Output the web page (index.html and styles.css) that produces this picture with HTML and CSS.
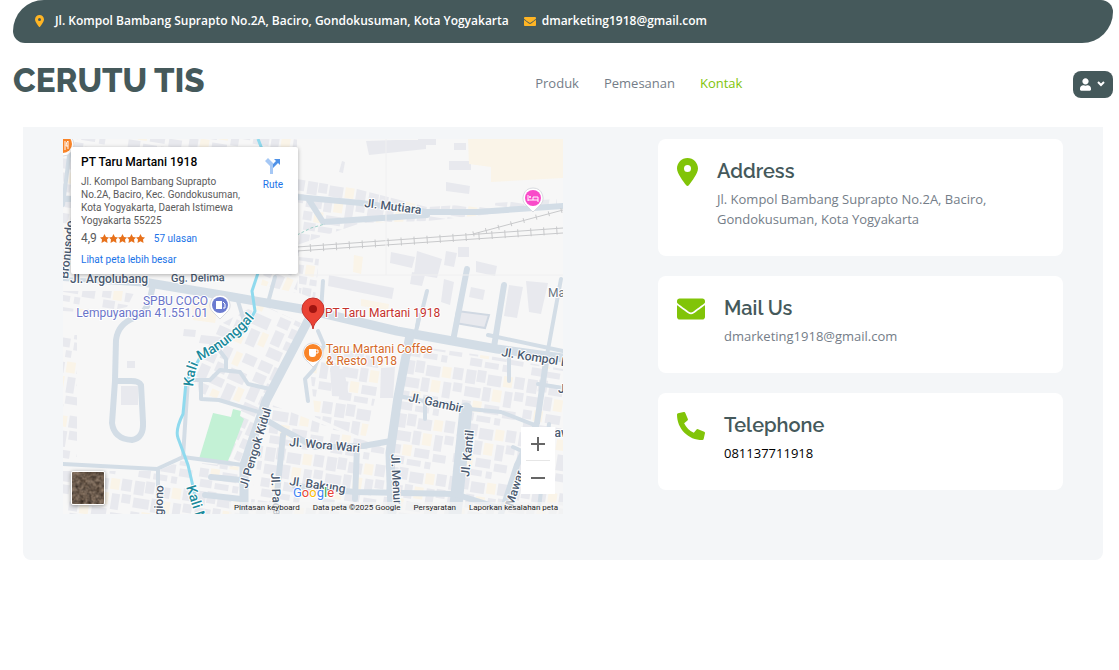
FILE: index.html
```html
<!DOCTYPE html>
<html lang="id">
<head>
  <meta charset="UTF-8">
  <meta name="viewport" content="width=device-width, initial-scale=1.0">
  <title>Cerutu TIS - Kontak</title>
  <link rel="stylesheet" href="styles.css">
</head>
<body>
  <svg class="sprite" aria-hidden="true">
    <symbol id="icon-pin" viewBox="0 0 384 512"><path d="M215.700 499.200C267 435 384 279.400 384 192C384 86 298 0 192 0S0 86 0 192c0 87.400 117 243 168.300 307.200c12.300 15.300 35.100 15.300 47.400 0zM192 128a64 64 0 1 1 0 128 64 64 0 1 1 0-128z"/></symbol>
    <symbol id="icon-mail" viewBox="0 64 512 384"><path d="M502.300 190.800c3.900-3.100 9.700-.2 9.700 4.700V400c0 26.500-21.500 48-48 48H48c-26.500 0-48-21.500-48-48V195.600c0-5 5.700-7.800 9.700-4.700 22.400 17.400 52.100 39.500 154.100 113.600 21.100 15.400 56.700 47.800 92.200 47.600 35.700.3 72-32.800 92.300-47.600 102-74.100 131.600-96.300 154-113.700zM256 320c23.200.4 56.600-29.200 73.400-41.400 132.700-96.300 142.800-104.700 173.400-128.700 5.800-4.500 9.200-11.500 9.200-18.900v-19c0-26.500-21.500-48-48-48H48c-26.500 0-48 21.500-48 48v19c0 7.400 3.400 14.300 9.200 18.900 30.600 23.900 40.700 32.400 173.400 128.700 16.800 12.200 50.200 41.800 73.400 41.400z"/></symbol>
    <symbol id="icon-phone" viewBox="0 0 512 512"><path d="M497.390 361.800l-112-48a24 24 0 0 0-28 6.900l-49.600 60.600A370.660 370.660 0 0 1 130.600 204.110l60.600-49.600a23.940 23.940 0 0 0 6.900-28l-48-112A24.160 24.160 0 0 0 122.600.61l-104 24A24 24 0 0 0 0 48c0 256.500 207.900 464 464 464a24 24 0 0 0 23.400-18.600l24-104a24.290 24.290 0 0 0-14.010-27.600z"/></symbol>
    <symbol id="icon-user" viewBox="0 0 448 512"><path d="M224 256c70.700 0 128-57.300 128-128S294.700 0 224 0 96 57.300 96 128s57.300 128 128 128zm89.600 32h-16.700c-22.200 10.200-46.900 16-72.900 16s-50.600-5.800-72.900-16h-16.700C60.200 288 0 348.200 0 422.400V464c0 26.500 21.500 48 48 48h352c26.500 0 48-21.500 48-48v-41.600c0-74.200-60.200-134.400-134.400-134.400z"/></symbol>
  </svg>

  <header class="header">
    <div class="topbar">
      <span class="topbar-item">
        <svg class="icon-top tall"><use href="#icon-pin"/></svg>
        <a href="#">Jl. Kompol Bambang Suprapto No.2A, Baciro, Gondokusuman, Kota Yogyakarta</a>
      </span>
      <span class="topbar-item">
        <svg class="icon-top wide"><use href="#icon-mail"/></svg>
        <a href="#">dmarketing1918@gmail.com</a>
      </span>
    </div>
    <nav class="navbar">
      <a href="#" class="brand"><h1>CERUTU TIS</h1></a>
      <div class="nav-links">
        <a href="#">Produk</a>
        <a href="#">Pemesanan</a>
        <a href="#" class="active">Kontak</a>
      </div>
      <button class="user-btn" type="button" aria-label="Akun">
        <svg class="icon-user"><use href="#icon-user"/></svg>
        <svg class="icon-caret" viewBox="0 0 8 6"><path d="M1 1l3 3 3-3"/></svg>
      </button>
    </nav>
  </header>

  <main class="contact">
    <div class="map">
      <svg class="map-canvas" viewBox="0 0 500 375" preserveAspectRatio="xMidYMid slice">
        <defs>
          <pattern id="houses" width="62" height="54" patternUnits="userSpaceOnUse" patternTransform="rotate(9)">
            <path class="house" d="M1 2h10v14h-10zM12 1h9v12h-9zM23 4h14v11h-14zM50 2h10v12h-10zM2 19h16v10h-16zM20 17h8v14h-8zM42 18h8v16h-8zM52 17h9v9h-9zM1 33h9v9h-9zM24 34h15v9h-15zM43 37h13v8h-13zM3 44h12v8h-12zM18 46h14v6h-14zM36 46h6v7h-6z"/>
            <path class="shop" d="M39 3h9v11h-9zM30 18h9v12h-9zM12 32h9v11h-9z"/>
          </pattern>
          <pattern id="houses-steep" width="54" height="60" patternUnits="userSpaceOnUse" patternTransform="rotate(24)">
            <path class="house" d="M1 1h13v10h-13zM16 2h9v14h-9zM38 1h13v10h-13zM1 14h12v10h-12zM31 20h17v12h-17zM16 20h11v10h-11zM2 28h10v15h-10zM16 34h14v9h-14zM33 36h10v17h-10zM3 46h15v10h-15z"/>
            <path class="shop" d="M29 3h7v14h-7zM45 35h7v14h-7zM22 47h8v8h-8z"/>
          </pattern>
        </defs>
        <rect class="land" width="500" height="375"/>

        <!-- blocks of houses -->
        <g fill="url(#houses)">
          <path d="M0 0h234v60l-20 60H0z"/>
          <path d="M234 40l60 10 70 18 130-8v8l-130 14-66 2-64 22z"/>
          <path d="M0 152h72l-8 16-28 6-36-2z"/>
          <path d="M262 206l62 4-12 50-10 40-50-22-4-40z"/>
          <path d="M344 206l88 12 68 12v145H340l-14-40z"/>
          <path d="M204 264l130 50 6 61H186z"/>
          <path d="M0 332h94l24-10 60 6v47H0z"/>
          <path d="M0 196h14v130H0z"/>
          <path d="M236 118l20 2-4 40-16-6z"/>
        </g>
        <g fill="url(#houses-steep)">
          <path d="M132 226l24-40 40-22 42 20-34 78-30 66-20-2 22-60-40-12z"/>
          <path d="M206 110l30 2-2 42-36-8z"/>
        </g>
        <path class="house" d="M303 2l60-2v10l-57 6zM355 0h18v6h-18zM391 4h12v7h-12zM386 22h22v9h-22zM383 43l24 4-1 8-23-3zM279 22l3 1-2 11-4-1z"/>
        <path class="house" d="M266 136l65 13-2 11-64-13zM328 113l24 5-3 11-22-5zM354 112l25 8-5 19-23-4zM383 112l11 2-3 14-10-2zM395 108h11v10h-11zM413 122l21 5-2 10-19-4zM349 133l13 3-3 11-12-2zM381 140l10 3-4 23-9-3zM408 148l14 3-2 10-14-3zM446 146l14 2-6 31-13-2zM463 142l22 2-7 31-12-2z"/>
        <path class="house" d="M58 247h17v19H58zM64 222h8v7h-8zM121 190l12 1-1 7-12-1zM138 196l20 2-2 8-20-2zM267 229l14 1 5 28-17-1zM318 229l14-1-2 31h-13z"/>
        <path class="shop" d="M405 0h95v39l-72 4V28l-22-3zM291 116l9 2-2 17-8-2zM298 160l28 5-1 6-27-4zM128 160l28 4-4 20-22-3z"/>
        <path class="house outline" d="M394 172l32 4-4 13-30-5z"/>
        <path class="park" d="M150 274l18 4 2-8 8 2-1 5 4 3-16 42-29-2z"/>

        <g class="roads">
          <path class="road w7" d="M0 66l8-66M0 140l34 2"/>
          <path class="road w13" d="M34 140l46 3 84 14 86 15 84 20 100 18 66 9"/>
          <path class="road w9" d="M0 60l234-2 64 6 66 9h50l86-6M364 76l-104 7-14-22"/>
          <path class="road w9" d="M90 146l-3 14q-4 14-16 19-16 6-18 22l-1 40M52 242l-3 42q2 16 20 17 12-2 11-18l-2-37q-2-4-10-4z"/>
          <path class="road w7" d="M0 325l94 5 26-12 60 8M95 331v44M125 240l-5 78"/>
          <path class="road w13" d="M249 174l-46 88-22 64v49"/>
          <path class="road w7" d="M125 241h22l10-10 20 2 8 12 22 5M163 230v-10l-6-8M138 260l18 1 46 14M138 260v-18M175 162l6 20M212 138l-6 22"/>
          <path class="road w9" d="M198 278l24 14 30 16 48-1 28-5M220 296l-8 79M148 338l30 3M142 356l36 4M294 308l-2 52"/>
          <path class="road w13" d="M347 196l-12 62-8 56 2 59"/>
          <path class="road w7" d="M336 257l60 12 42 4 36 14M362 260v20M255 192l6 14-10 24-9 10 3 22M260 142l-2 30M364 152l-5 20M356 176l-2 12M446 216v26"/>
          <path class="road w15" d="M403 270l-11 105"/>
          <path class="road w9" d="M232 347l60 6 100 2 44 14M484 216l-10 68-20 42-16 49M404 130l-14 72M441 146l-10 62"/>
          <path class="road w7" d="M498 140l-14 76M425 196l75 16M486 285l-10 84M475 245l25 4M450 308l40 18M356 180l-4 16"/>
        </g>
        <path class="river" d="M195 0l8 20-12 90 4 24-6 18 3 20-10 20-44 25-15 26-3 32q-8 16-5 24l10 27 10 43"/>
        <path class="rail" d="M234 108l266-19M234 112l266-18M410 95l90-24"/>
        <path class="rail ties" d="M234 110l266-19"/>
        <path class="rail ties thin" d="M410 95l90-24"/>
        <path class="trail" d="M234 96l14-7 14-4"/>
        <path class="parcel" d="M323 0v136M234 136h266"/>

        <g class="street">
          <text x="301" y="68" transform="rotate(7 301 68)">Jl. Mutiara</text>
          <text x="7" y="144">Jl. Argolubang</text>
          <text class="small" x="108" y="143" transform="rotate(-1 108 143)">Gg. Delima</text>
          <text x="438" y="217" transform="rotate(9 438 217)">Jl. Kompol Bambang</text>
          <text x="345" y="262" transform="rotate(12 345 262)">Jl. Gambir</text>
          <text x="226" y="307" transform="rotate(5 226 307)">Jl. Wora Wari</text>
          <text x="226" y="346" transform="rotate(8 226 346)">Jl. Bakung</text>
          <text x="184" y="350" transform="rotate(-73 184 350)">Jl Pengok Kidul</text>
          <text x="406" y="338" transform="rotate(-84 406 338)">Jl. Kantil</text>
          <text x="328" y="315" transform="rotate(87 328 315)">Jl. Menur</text>
          <text x="208" y="334" transform="rotate(87 208 334)">Jl. Pacar</text>
          <text x="450" y="368" transform="rotate(-72 450 368)">Mawar</text>
          <text x="99" y="390" transform="rotate(-88 99 390)">Jogiono</text>
          <text x="5" y="140" transform="rotate(-84 5 140)">Bronusodo</text>
          <text x="485" y="158" class="plain">Mawar</text>
          <text x="481" y="298">Mawar</text>
          <text x="495" y="254">Jl.</text>
        </g>
        <path id="kali" fill="none" d="M130 248q2-20 8-27 38-18 62-54"/>
        <g class="water">
          <text><textPath href="#kali">Kali Manunggal</textPath></text>
          <text x="123" y="348" transform="rotate(72 123 348)">Kali Manunggal</text>
        </g>

        <!-- places -->
        <g class="place">
          <g class="fuel"><path class="bubble" d="M157 156a10 10 0 0 1 6 18l-6 6-6-6a10 10 0 0 1 6-18z"/><circle cx="157" cy="166" r="8"/>
            <path class="glyph" d="M153 162h6v8h-6z"/><path class="glyph-line" d="M160 163l2 2v4h-2"/>
            <text x="145" y="166" text-anchor="end">SPBU COCO</text><text x="145" y="178" text-anchor="end">Lempuyangan 41.551.01</text></g>
          <g class="food"><path class="bubble" d="M250 204a10 10 0 0 1 6 18l-6 6-6-6a10 10 0 0 1 6-18z"/><circle cx="250" cy="214" r="9"/>
            <path class="glyph" d="M246 210h7v5q0 3-3 3h-1q-3 0-3-3z"/><path class="glyph-line" d="M253 211h2v3h-2"/>
            <text x="263" y="214">Taru Martani Coffee</text><text x="263" y="226">&amp; Resto 1918</text></g>
          <g class="food"><circle class="bubble" cx="0" cy="6" r="11"/><circle cx="0" cy="5" r="9"/><path class="glyph-line" d="M2 2v9M5 10V2q-2 1-2 5h2"/></g>
          <g class="hotel"><path class="bubble" d="M470 49a10 10 0 0 1 6 18l-6 6-6-6a10 10 0 0 1 6-18z"/><circle cx="470" cy="59" r="8"/>
            <path class="glyph-line" d="M465 56v6M465 61h10v2M475 61v-3h-5v3"/><circle class="glyph" cx="467" cy="58" r="1"/></g>
          <g class="main-place"><path class="marker" d="M250 190c-1-9-11-11-11-20a11 11 0 0 1 22 0c0 9-10 11-11 20z"/><circle class="marker-dot" cx="250" cy="170" r="4"/>
            <text x="262" y="178">PT Taru Martani 1918</text></g>
        </g>
      </svg>

      <div class="place-card">
        <div class="place-info">
          <h2>PT Taru Martani 1918</h2>
          <p>Jl. Kompol Bambang Suprapto No.2A, Baciro, Kec. Gondokusuman, Kota Yogyakarta, Daerah Istimewa Yogyakarta 55225</p>
          <div class="rating">
            <span class="score">4,9</span>
            <svg class="stars" viewBox="0 0 45 9"><path id="star" d="M4.500 0L6 3l3 .4-2 2.200.5 3.400-3-1.700L1.500 9 2 5.600 0 3.400 3 3z"/><use href="#star" x="9"/><use href="#star" x="18"/><use href="#star" x="27"/><use href="#star" x="36"/></svg>
            <a href="#">57 ulasan</a>
          </div>
          <a href="#">Lihat peta lebih besar</a>
        </div>
        <a href="#" class="route">
          <svg viewBox="0 0 16 16"><path class="route-light" d="M0 3l3-3 5 5v11H5V8z"/><path class="route-dark" d="M9 1h6v6l-2-2-5 5V6l3-3z"/></svg>
          Rute
        </a>
      </div>

      <button class="satellite" type="button" aria-label="Tampilkan citra satelit">
        <svg viewBox="0 0 32 32">
          <filter id="ground" color-interpolation-filters="sRGB"><feTurbulence type="fractalNoise" baseFrequency="0.25" numOctaves="4" seed="8"/><feColorMatrix values="0.400 0.200 0 0 0.120  0.350 0.200 0 0 0.080  0.300 0.200 0 0 0.050  0 0 0 0 1"/></filter>
          <rect width="32" height="32" filter="url(#ground)"/>
        </svg>
      </button>

      <div class="zoom">
        <button type="button" aria-label="Perbesar"><svg viewBox="0 0 14 14"><path d="M0 7h14M7 0v14"/></svg></button>
        <button type="button" aria-label="Perkecil"><svg viewBox="0 0 14 14"><path d="M0 7h14"/></svg></button>
      </div>

      <a href="#" class="google" aria-label="Google"><span class="b">G</span><span class="r">o</span><span class="y">o</span><span class="b">g</span><span class="g">l</span><span class="r">e</span></a>
      <div class="credits">
        <button type="button">Pintasan keyboard</button>
        <span>Data peta ©2025 Google</span>
        <a href="#">Persyaratan</a>
        <a href="#">Laporkan kesalahan peta</a>
      </div>
    </div>

    <div class="info">
      <div class="info-card">
        <svg class="icon-info tall"><use href="#icon-pin"/></svg>
        <div>
          <h4>Address</h4>
          <p>Jl. Kompol Bambang Suprapto No.2A, Baciro, Gondokusuman, Kota Yogyakarta</p>
        </div>
      </div>
      <div class="info-card">
        <svg class="icon-info"><use href="#icon-mail"/></svg>
        <div>
          <h4>Mail Us</h4>
          <p>dmarketing1918@gmail.com</p>
        </div>
      </div>
      <div class="info-card">
        <svg class="icon-info"><use href="#icon-phone"/></svg>
        <div>
          <h4>Telephone</h4>
          <a href="#">081137711918</a>
        </div>
      </div>
    </div>
  </main>
</body>
</html>
```
FILE: styles.css
```css
* {
  box-sizing: border-box;
}

body {
  margin: 0;
  background: #fff;
  color: #747d88;
  font-family: "Open Sans", sans-serif;
  font-size: 13px;
  line-height: 20px;
}

h1, h2, h4, p {
  margin: 0;
}

a {
  text-decoration: none;
}

button {
  border: none;
  padding: 0;
  cursor: pointer;
  font-family: inherit;
}

.sprite {
  display: none;
}

/* header */
.header {
  padding: 0 6px 0 13px;
}

.topbar {
  display: flex;
  gap: 15px;
  height: 43px;
  padding: 11px 22px;
  background: #45595b;
  border-radius: 31px 12px 31px 12px;
}

.topbar-item {
  display: flex;
  align-items: center;
  height: 20px;
}

.topbar-item a {
  color: #fff;
  font-size: 12px;
  font-weight: 600;
}

.icon-top {
  fill: #ffb524;
}

.icon-top.tall {
  width: 9px;
  height: 12px;
  margin-right: 11px;
}

.icon-top.wide {
  width: 12px;
  height: 9px;
  margin-right: 6px;
}

.navbar {
  display: flex;
  justify-content: space-between;
  align-items: center;
  height: 82px;
}

.brand h1 {
  color: #45595b;
  font-family: Raleway, Lato, sans-serif;
  font-size: 33px;
  font-weight: 800;
  line-height: 40px;
  padding-bottom: 6px;
}

.nav-links {
  display: flex;
  gap: 25px;
  padding-bottom: 2px;
}

.nav-links a {
  color: #747d88;
}

.nav-links a.active {
  color: #81c408;
}

.user-btn {
  display: flex;
  align-items: center;
  justify-content: center;
  gap: 6px;
  width: 40px;
  height: 27px;
  background: #45595b;
  border-radius: 8px;
}

.icon-user {
  width: 11px;
  height: 13px;
  fill: #fff;
}

.icon-caret {
  width: 8px;
  height: 6px;
  fill: none;
  stroke: #fff;
  stroke-width: 2;
}

/* contact section */
.contact {
  display: grid;
  grid-template-columns: 595fr 405fr;
  align-items: start;
  margin: 2px 16px 40px 23px;
  padding: 12px 40px 46px;
  background: #f4f6f8;
  border-radius: 0 0 8px 8px;
}

.info {
  display: flex;
  flex-direction: column;
  gap: 20px;
}

.info-card {
  display: flex;
  gap: 19px;
  padding: 19px 19px 27px;
  background: #fff;
  border-radius: 8px;
}

.info-card h4 {
  margin-bottom: 5px;
  color: #45595b;
  font-family: Raleway, Lato, sans-serif;
  font-size: 20px;
  font-weight: 600;
  line-height: 26px;
}

.info-card a {
  color: #000;
}

.icon-info {
  flex: none;
  width: 28px;
  height: 28px;
  fill: #81c408;
}

.icon-info.tall {
  width: 21px;
}

/* map */
.map {
  position: relative;
  width: 100%;
  max-width: 500px;
  height: 375px;
  overflow: hidden;
  font-family: Roboto, sans-serif;
}

.map-canvas {
  display: block;
  width: 100%;
  height: 100%;
}

.land {
  fill: #f7f7f7;
}

.house {
  fill: #e8e9ee;
}

.house.outline {
  stroke: #d0d8e2;
  stroke-width: 2;
}

.shop {
  fill: #faf4e8;
}

.park {
  fill: #c3f1d5;
}

.road {
  fill: none;
  stroke: #d3dde6;
  stroke-linecap: round;
  stroke-linejoin: round;
}

.w7 { stroke-width: 4; }
.w9 { stroke-width: 6; }
.w13 { stroke-width: 9; }
.w15 { stroke-width: 13; }

.river {
  fill: none;
  stroke: #90daee;
  stroke-width: 3;
  stroke-linejoin: round;
}

.rail {
  fill: none;
  stroke: #c8c9cb;
}

.rail.ties {
  stroke-width: 8;
  stroke-dasharray: 1 12;
}

.rail.ties.thin {
  stroke-width: 5;
}

.trail {
  fill: none;
  stroke: #9fd0c9;
  stroke-dasharray: 3 2;
}

.parcel {
  fill: none;
  stroke: #f0f0f1;
}

.map-canvas text {
  paint-order: stroke;
  stroke: #fff;
  stroke-width: 2px;
  stroke-linejoin: round;
}

.street text {
  fill: #4b5b71;
  font-size: 12px;
  font-weight: 500;
}

.street .small {
  font-size: 11px;
}

.street .plain {
  fill: #6b7683;
  font-weight: 400;
}

.water text {
  fill: #1b8a9c;
  font-size: 14px;
  font-weight: 500;
}

.place text {
  font-size: 12px;
}

.bubble {
  fill: #fff;
  stroke: #d9dbe0;
}

.fuel { fill: #6b7bd0; }
.food { fill: #f98428; }
.hotel { fill: #f94bc9; }
.fuel text { fill: #6a74c9; }
.food text { fill: #d4692a; }

.main-place text {
  fill: #c5322d;
}

.glyph {
  fill: #fff;
}

.glyph-line {
  fill: none;
  stroke: #fff;
}

.marker {
  fill: #ea4335;
  stroke: #c5322d;
}

.marker-dot {
  fill: #a11410;
}

/* place card over the map */
.place-card {
  position: absolute;
  top: 8px;
  left: 8px;
  display: flex;
  justify-content: space-between;
  width: 227px;
  height: 127px;
  padding: 8px 15px 8px 10px;
  background: #fff;
  border-radius: 2px;
  box-shadow: 0 1px 4px rgba(0, 0, 0, 0.3);
  color: #5b5b5b;
  font-size: 10px;
  line-height: 13px;
}

.place-card h2 {
  margin-bottom: 5px;
  color: #000;
  font-size: 12px;
  font-weight: 500;
  line-height: 15px;
}

.place-card a {
  color: #1a73e8;
}

.place-info {
  width: 165px;
}

.rating {
  display: flex;
  align-items: center;
  margin: 5px 0 8px;
}

.score {
  font-size: 12px;
}

.stars {
  width: 45px;
  height: 9px;
  margin: 0 9px 0 3px;
  fill: #e7711b;
}

.route {
  display: flex;
  flex-direction: column;
  align-items: center;
  gap: 4px;
  padding-top: 3px;
}

.route svg {
  width: 16px;
  height: 16px;
}

.route-light {
  fill: #a6c8f5;
}

.route-dark {
  fill: #4f92e8;
}

.satellite {
  position: absolute;
  left: 8px;
  bottom: 9px;
  width: 34px;
  height: 34px;
  border: 1px solid #fff;
  border-radius: 2px;
  overflow: hidden;
  box-shadow: 0 1px 4px rgba(0, 0, 0, 0.4);
}

.satellite svg {
  display: block;
  width: 32px;
  height: 32px;
}

.zoom {
  position: absolute;
  right: 8px;
  bottom: 20px;
  width: 34px;
  padding: 0 5px;
  background: #fff;
}

.zoom button {
  display: flex;
  align-items: center;
  justify-content: center;
  width: 24px;
  height: 33px;
  background: none;
}

.zoom button + button {
  border-top: 1px solid #e6e6e6;
  height: 34px;
}

.zoom svg {
  width: 14px;
  height: 14px;
  fill: none;
  stroke: #666;
  stroke-width: 2;
}

.google {
  position: absolute;
  left: 230px;
  bottom: 13px;
  font-size: 13px;
  line-height: 16px;
  -webkit-text-stroke: 2px #fff;
  paint-order: stroke;
}

.google .b { color: #4285f4; }
.google .r { color: #ea4335; }
.google .y { color: #fbbc04; }
.google .g { color: #34a853; }

.credits {
  position: absolute;
  right: 0;
  bottom: 0;
  display: flex;
  gap: 13px;
  padding: 0 5px;
  background: rgba(245, 245, 245, 0.7);
  color: #222;
  font-size: 8px;
  line-height: 12px;
  white-space: nowrap;
}

.credits a,
.credits button {
  background: none;
  color: #222;
  font-size: 8px;
  line-height: 12px;
}

@media (max-width: 900px) {
  .contact {
    grid-template-columns: 1fr;
    gap: 20px;
  }

  .topbar {
    height: auto;
    flex-wrap: wrap;
  }
}
```
